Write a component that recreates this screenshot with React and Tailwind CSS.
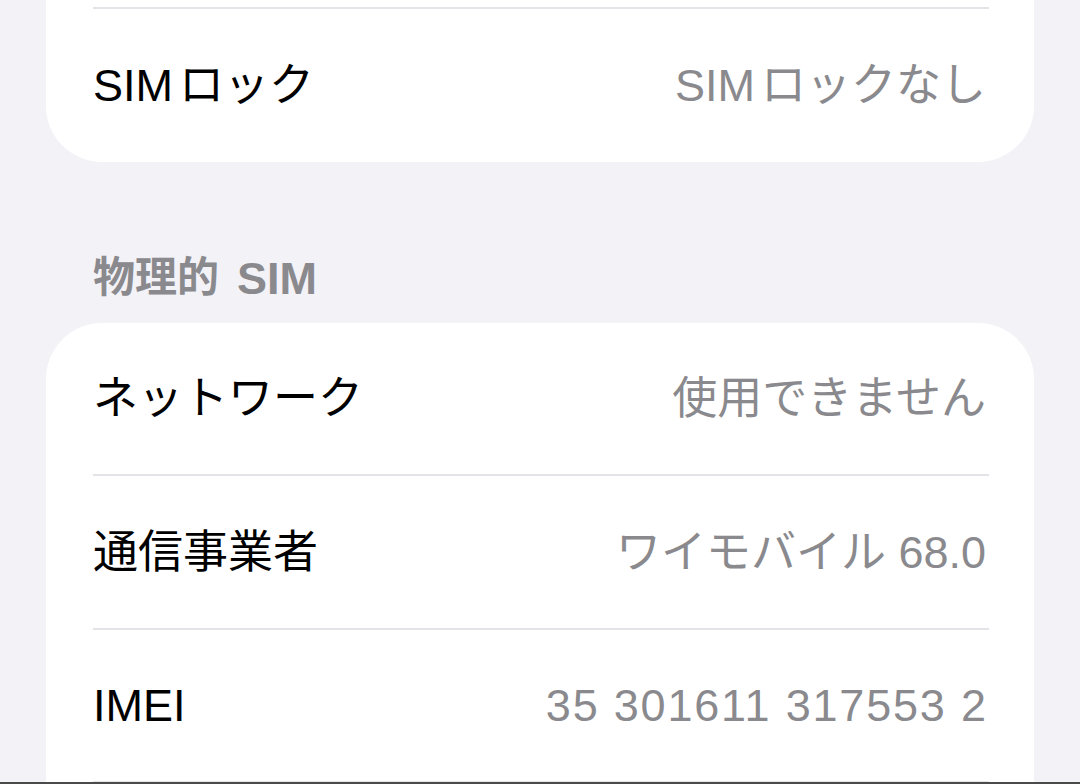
const FONT = "font-['Liberation_Sans','Noto_Sans_CJK_JP',sans-serif]";

const Row = ({ label, value, height = 'h-[151px]', valueClass = '' }) => (
  <div className={`flex items-center justify-between pl-[47px] pr-[48px] ${height}`}>
    <span className="text-[45px] text-black leading-none">{label}</span>
    <span className={`text-[45px] text-[#8a8a8e] leading-none ${valueClass}`}>{value}</span>
  </div>
);

const Divider = () => <div className="h-[2px] bg-[#e4e4e8] ml-[47px] mr-[45px]" />;

// small gap between latin and kana, like the iOS font does
const SimLock = ({ suffix }) => (
  <>
    SIM<span className="ml-[6px]">ロック{suffix}</span>
  </>
);

export default function App() {
  return (
    <div className={`relative h-[784px] w-[1080px] overflow-hidden bg-[#f2f2f7] ${FONT}`}>
      {/* previous group, cut off at top */}
      <div className="mx-[46px] -mt-[100px] pt-[107px] bg-white rounded-[56px]">
        <Divider />
        <Row label={<SimLock suffix="" />} value={<SimLock suffix="なし" />} height="h-[153px]" />
      </div>

      <div className="mt-[92px] mb-[21px] pl-[93px] h-[48px] flex items-center text-[42px] font-bold text-[#8a8a8e] leading-none">
        物理的<span className="ml-[18px] text-[45px]">SIM</span>
      </div>

      <div className="mx-[46px] bg-white rounded-[56px] pb-[200px]">
        <Row label="ネットワーク" value="使用できません" />
        <Divider />
        <Row label="通信事業者" value="ワイモバイル 68.0" height="h-[152px]" />
        <Divider />
        <Row label="IMEI" value="35 301611 317553 2" valueClass="tracking-[1.8px] -mr-[1.8px]" />
        <Divider />
      </div>

      <div className="absolute bottom-0 left-0 right-0 h-[2px] bg-[#4a4a4a]" />
    </div>
  );
}
